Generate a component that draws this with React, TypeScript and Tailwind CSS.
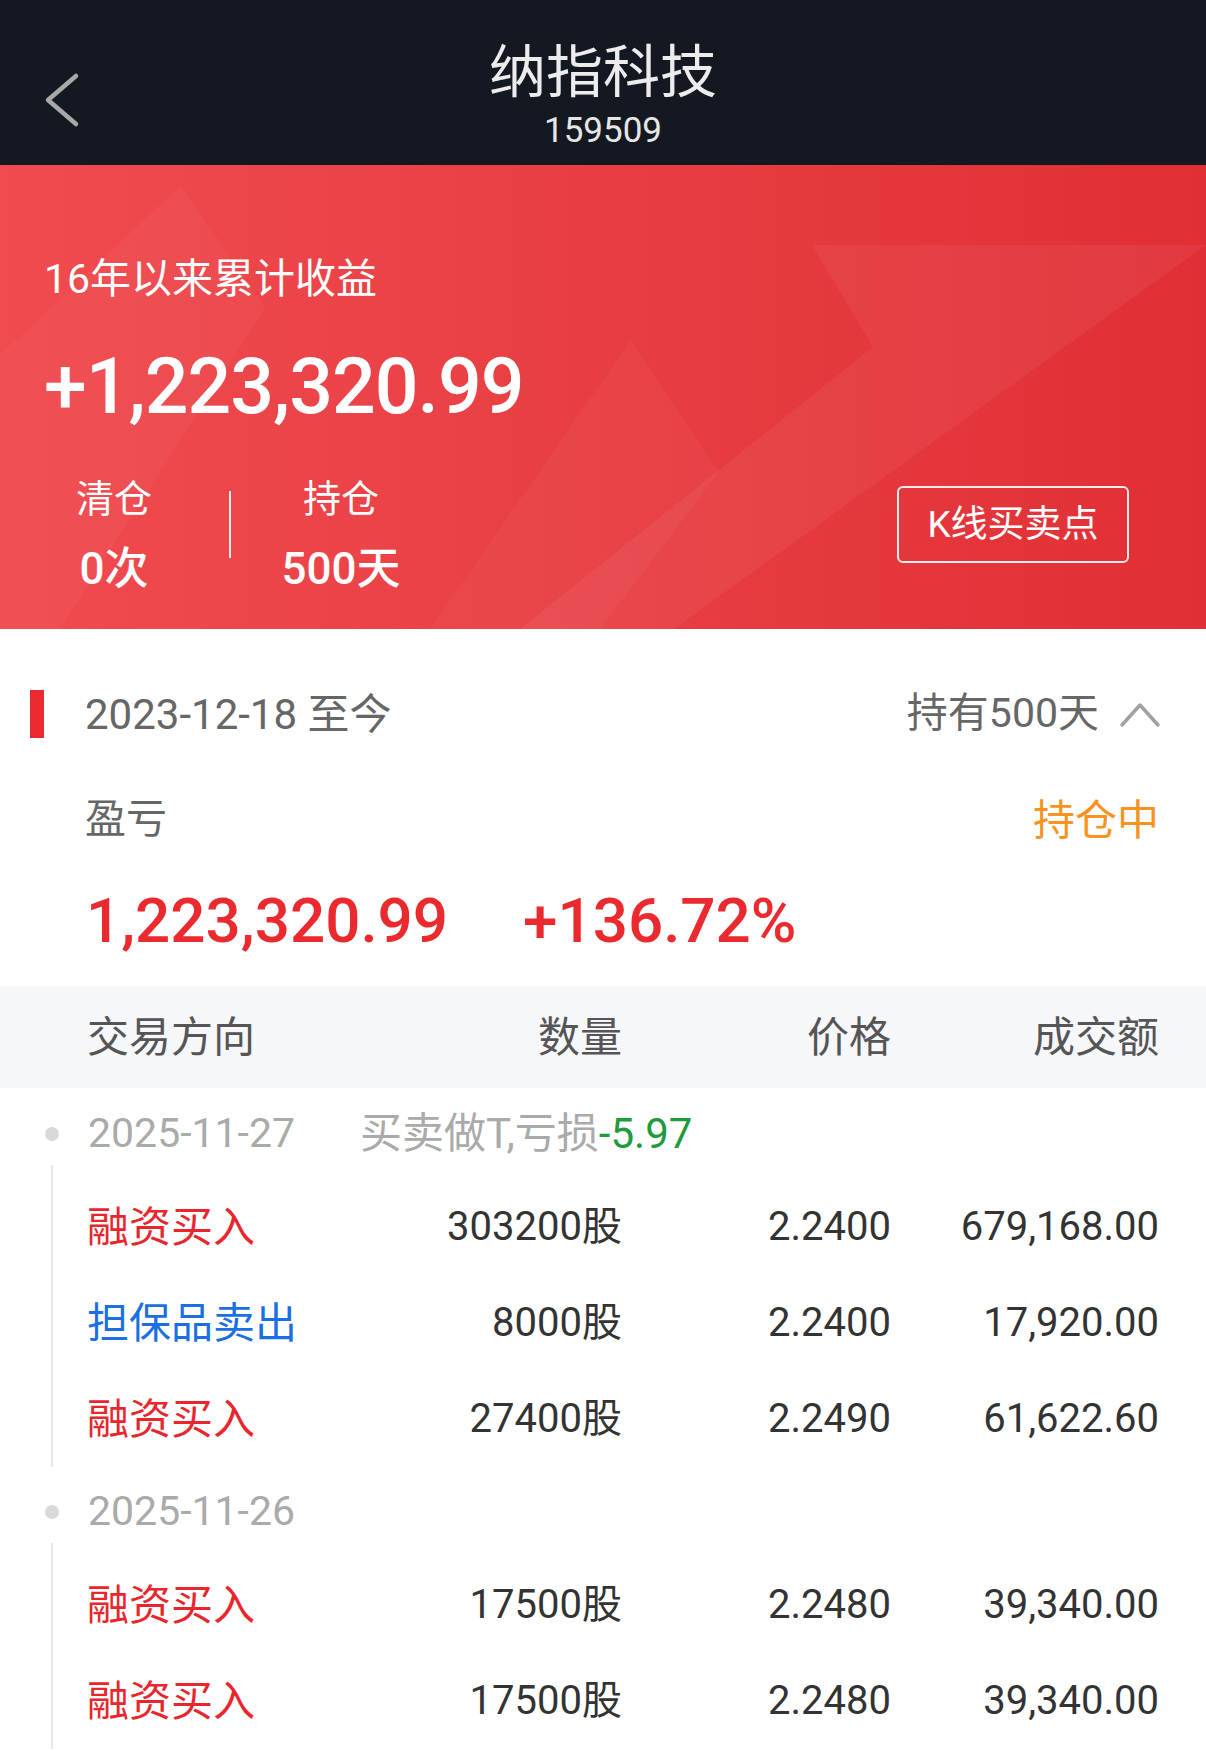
import React from 'react'

const FONT = 'font-[Roboto,"Noto_Sans_CJK_SC",sans-serif]'

type Trade = { side: string; buy: boolean; qty: string; price: string; amount: string }

const groups: { date: string; note?: string; loss?: string; trades: Trade[] }[] = [
  {
    date: '2025-11-27',
    note: '买卖做T,亏损',
    loss: '-5.97',
    trades: [
      { side: '融资买入', buy: true, qty: '303200股', price: '2.2400', amount: '679,168.00' },
      { side: '担保品卖出', buy: false, qty: '8000股', price: '2.2400', amount: '17,920.00' },
      { side: '融资买入', buy: true, qty: '27400股', price: '2.2490', amount: '61,622.60' },
    ],
  },
  {
    date: '2025-11-26',
    trades: [
      { side: '融资买入', buy: true, qty: '17500股', price: '2.2480', amount: '39,340.00' },
      { side: '融资买入', buy: true, qty: '17500股', price: '2.2480', amount: '39,340.00' },
    ],
  },
]

function BannerShapes() {
  // faint zig-zag arrow drawn behind the banner text
  return (
    <svg className="absolute inset-0 w-full h-full" viewBox="0 0 1206 464" preserveAspectRatio="none">
      <polygon points="0,190 181,20 265,143 60,464 0,464" fill="#ffffff" fillOpacity="0.03" />
      <polygon points="631,175 719,307 600,464 430,464" fill="#ffffff" fillOpacity="0.035" />
      <polygon points="812,80 1206,80 674,464 520,464 873,182" fill="#ffffff" fillOpacity="0.05" />
    </svg>
  )
}

export default function App() {
  return (
    <div className={`w-[1206px] h-[1751px] overflow-hidden bg-white ${FONT}`}>
      {/* Top bar */}
      <div className="relative h-[165px] bg-[#141821] flex flex-col items-center pt-[41px]">
        <svg className="absolute left-[40px] top-[70px]" width="44" height="60" viewBox="0 0 44 60">
          <polyline points="36,6 8,30 36,54" fill="none" stroke="#a8a8a8" strokeWidth="4.5" strokeLinecap="round" strokeLinejoin="round" />
        </svg>
        <div className="text-[57px] leading-[64px] text-[#ececec]">纳指科技</div>
        <div className="mt-[6px] text-[35px] leading-[40px] text-[#e6e6e6]">159509</div>
      </div>

      {/* Red summary banner */}
      <div className="relative h-[464px] overflow-hidden bg-gradient-to-r from-[#f04b4f] to-[#e02f35]">
        <BannerShapes />
        <div className="relative flex flex-col pl-[44px] pr-[77px] pt-[89px] text-white">
          <div className="text-[41px] leading-[50px]">16年以来累计收益</div>
          <div className="mt-[38px] text-[77px] leading-[90px] font-medium tracking-[-1px]">+1,223,320.99</div>
          <div className="mt-[43px] flex">
            <div className="w-[140px] flex flex-col items-center">
              <div className="text-[38px] leading-[48px]">清仓</div>
              <div className="mt-[20px] text-[44px] leading-[52px] font-medium">0次</div>
            </div>
            <div className="ml-[45px] mt-[16px] w-[2px] h-[67px] bg-white/90" />
            <div className="w-[220px] flex flex-col items-center">
              <div className="text-[38px] leading-[48px]">持仓</div>
              <div className="mt-[20px] text-[44px] leading-[52px] font-medium">500天</div>
            </div>
            <div className="ml-auto mt-[11px] w-[232px] h-[77px] border-2 border-white/90 rounded-[6px] flex items-center justify-center text-[37px]">
              K线买卖点
            </div>
          </div>
        </div>
      </div>

      {/* Period summary */}
      <div className="pt-[61px] pb-[26px]">
        <div className="flex items-center h-[48px]">
          <div className="ml-[30px] w-[14px] h-[48px] bg-[#ea2a2f]" />
          <div className="ml-[41px] text-[42px] text-[#666666]">2023-12-18 至今</div>
          <div className="ml-auto text-[41px] text-[#666666]">持有500天</div>
          <svg className="ml-[20px] mr-[45px]" width="42" height="28" viewBox="0 0 42 28">
            <polyline points="3,25 21,5 39,25" fill="none" stroke="#a0a0a0" strokeWidth="3.5" strokeLinecap="round" strokeLinejoin="round" />
          </svg>
        </div>
        <div className="mt-[54px] flex items-center h-[56px] pl-[85px] pr-[47px]">
          <div className="text-[41px] text-[#666666]">盈亏</div>
          <div className="ml-auto text-[42px] text-[#f7931e]">持仓中</div>
        </div>
        <div className="mt-[32px] flex items-center h-[80px] pl-[86px] text-[#ea2a2f] font-medium text-[62px]">
          <div className="w-[437px]">1,223,320.99</div>
          <div>+136.72%</div>
        </div>
      </div>

      {/* Table header */}
      <div className="flex items-center h-[102px] bg-[#f5f7fa] pl-[87px] pr-[47px] text-[42px] text-[#555555]">
        <div className="w-[273px]">交易方向</div>
        <div className="w-[262px] text-right">数量</div>
        <div className="w-[269px] text-right">价格</div>
        <div className="w-[268px] text-right">成交额</div>
      </div>

      {/* Trade timeline */}
      {groups.map((g, gi) => (
        <div key={gi}>
          <div className={`flex items-center pl-[45px] ${gi === 0 ? 'h-[91px]' : 'h-[90px]'}`}>
            <div className="w-[14px] h-[14px] rounded-full bg-[#d9d9d9]" />
            <div className="ml-[29px] w-[272px] text-[41px] text-[#aaaaaa]">{g.date}</div>
            {g.note && (
              <div className="text-[42px] text-[#aaaaaa]">
                {g.note}
                <span className="text-[#1f9a3c]">{g.loss}</span>
              </div>
            )}
          </div>
          <div className="relative -mt-[14px] pt-[14px] ml-[51px] border-l-2 border-[#e8e8e8]">
            {g.trades.map((t, ti) => (
              <div key={ti} className="flex items-center h-[96px] pl-[34px] pr-[47px] text-[40px] text-[#333333]">
                <div className={`w-[273px] text-[42px] ${t.buy ? 'text-[#e8262d]' : 'text-[#1b6fe3]'}`}>{t.side}</div>
                <div className="w-[262px] text-right">{t.qty}</div>
                <div className="w-[269px] text-right">{t.price}</div>
                <div className="w-[268px] text-right">{t.amount}</div>
              </div>
            ))}
          </div>
        </div>
      ))}
    </div>
  )
}
